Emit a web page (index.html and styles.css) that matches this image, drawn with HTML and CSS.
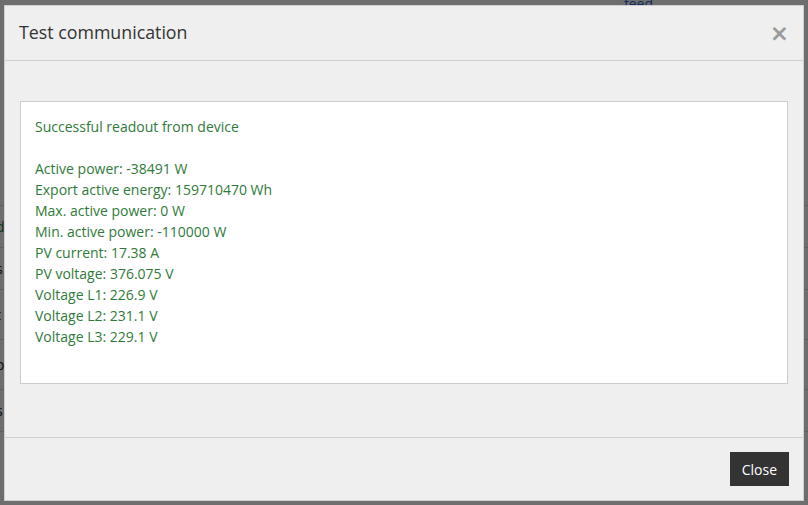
FILE: index.html
```html
<!DOCTYPE html>
<html>
<head>
<meta charset="utf-8">
<link rel="stylesheet" href="styles.css">
</head>
<body>
<div class="page">
  <div class="page-top"><span class="feed">feed</span></div>
  <div class="page-rows">
    <div class="prow">i</div>
    <div class="prow link">d</div>
    <div class="prow">s</div>
    <div class="prow tall">t</div>
    <div class="prow tall">o</div>
    <div class="prow">s</div>
  </div>
</div>
<div class="backdrop"></div>
<div class="modal">
  <div class="modal-header">
    <h4 class="modal-title">Test communication</h4>
    <button class="close" type="button">&times;</button>
  </div>
  <div class="modal-body">
    <div class="result">
      <div class="line">Successful readout from device</div>
      <div class="line">&nbsp;</div>
      <div class="line">Active power: -38491 W</div>
      <div class="line">Export active energy: 159710470 Wh</div>
      <div class="line">Max. active power: 0 W</div>
      <div class="line">Min. active power: -110000 W</div>
      <div class="line">PV current: 17.38 A</div>
      <div class="line">PV voltage: 376.075 V</div>
      <div class="line">Voltage L1: 226.9 V</div>
      <div class="line">Voltage L2: 231.1 V</div>
      <div class="line">Voltage L3: 229.1 V</div>
      <div class="line">&nbsp;</div>
    </div>
  </div>
  <div class="modal-footer">
    <button class="btn" type="button">Close</button>
  </div>
</div>
</body>
</html>
```

FILE: styles.css
```css
* { box-sizing: border-box; }
html, body {
  margin: 0;
  padding: 0;
  width: 808px;
  height: 505px;
  overflow: hidden;
  font-family: "Open Sans", "Noto Sans", sans-serif;
}
body { background: #fff; position: relative; }

.page { width: 808px; height: 505px; }
.page-top { height: 24px; padding-left: 624px; }
.feed { color: #2a6ad0; font-size: 14px; line-height: 1; position: relative; top: -8px; display: inline-block; }
.page-rows { padding-top: 140px; }
.prow {
  height: 42px;
  border-bottom: 1px solid #ddd;
  font-size: 14px;
  line-height: 42px;
  color: #222;
  text-indent: -4px;
}
.prow.link { color: #1a7a3a; }
.prow.tall { height: 50px; line-height: 50px; }

.backdrop {
  position: absolute;
  inset: 0;
  background: rgba(0, 0, 0, 0.57);
}

.modal {
  position: absolute;
  left: 4px;
  top: 5px;
  width: 800px;
  height: 496px;
  background: #efefef;
  border: 1px solid #d0d0d0;
  display: flex;
  flex-direction: column;
}

.modal-header {
  height: 55px;
  border-bottom: 1px solid #cfcfcf;
  display: flex;
  align-items: center;
  justify-content: space-between;
  padding: 0 14px 0 14px;
}
.modal-title {
  margin: 0;
  font-size: 17.8px;
  font-weight: 400;
  color: #333;
  position: relative;
  top: -1px;
}
.close {
  border: 0;
  background: none;
  padding: 0;
  font-family: "DejaVu Sans", sans-serif;
  font-size: 23px;
  font-weight: bold;
  color: #9a9a9a;
  line-height: 1;
}

.modal-body {
  flex: 1;
  padding: 40px 15px 0 15px;
}
.result {
  background: #fff;
  border: 1px solid #ccc;
  padding: 14px 14px 15px 14px;
  font-size: 14px;
  line-height: 21px;
  color: #2f7a3a;
}

.modal-footer {
  border-top: 1px solid #cfcfcf;
  padding: 14px 14px 14px 0;
  display: flex;
  justify-content: flex-end;
}
.btn {
  background: #333;
  color: #fff;
  border: 0;
  font-family: "Open Sans", "Noto Sans", sans-serif;
  font-size: 14px;
  height: 34px;
  padding: 0 12px;
}
```
